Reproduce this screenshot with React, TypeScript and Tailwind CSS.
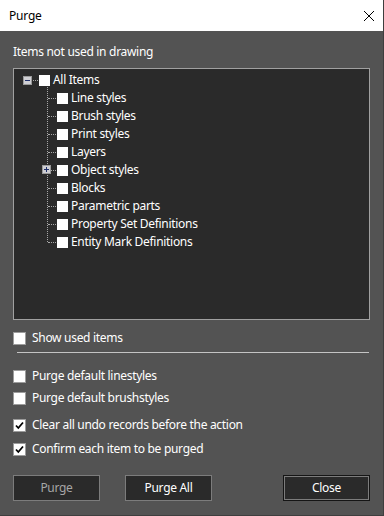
import React from "react";

const font = { fontFamily: '"Noto Sans", "Segoe UI", sans-serif' };

function TreeCheck() {
  return <span className="block w-[11px] h-[11px] bg-white shrink-0" />;
}

function ExpandBox({ plus }: { plus?: boolean }) {
  return (
    <span className="relative block w-[9px] h-[9px] border border-[#9a9a9a] bg-[#cfcfd4] shrink-0">
      <span className="absolute left-[1px] top-[3px] w-[5px] h-px bg-[#1f2f6a]" />
      {plus && <span className="absolute left-[3px] top-[1px] w-px h-[5px] bg-[#1f2f6a]" />}
    </span>
  );
}

function Check({ checked, label }: { checked?: boolean; label: string }) {
  return (
    <div className="flex items-center h-4 gap-[6px]">
      <span className="relative w-[13px] h-[13px] bg-white border border-[#9c9c9c] shrink-0">
        {checked && (
          <svg className="absolute left-[1px] top-[1px]" width="9" height="9" viewBox="0 0 9 9">
            <path d="M1 4.5 L3.3 7 L8 1.5" stroke="#000" strokeWidth="1.8" fill="none" />
          </svg>
        )}
      </span>
      <span className="text-[12px] leading-4 text-white tracking-[-0.3px]">{label}</span>
    </div>
  );
}

const children = [
  "Line styles",
  "Brush styles",
  "Print styles",
  "Layers",
  "Object styles",
  "Blocks",
  "Parametric parts",
  "Property Set Definitions",
  "Entity Mark Definitions",
];

export default function App() {
  return (
    <div className="w-[384px] h-[516px] bg-[#535353] flex flex-col border-r border-b border-[#3e3e3e]" style={font}>
      <div className="h-[31px] bg-white flex items-center justify-between pl-[9px] pr-[8px] shrink-0">
        <span className="text-[12px] text-black tracking-[-0.2px]">Purge</span>
        <svg width="12" height="12" viewBox="0 0 12 12">
          <path d="M1 1 L11 11 M11 1 L1 11" stroke="#000" strokeWidth="1" />
        </svg>
      </div>
      <div className="flex flex-col pl-[13px] pr-[13px]">
        <div className="mt-[13px] h-4 text-[12px] leading-4 text-white tracking-[-0.3px]">Items not used in drawing</div>
        <div className="mt-[8px] w-[357px] h-[252px] border border-[#a0a0a0] bg-[#2a2a2a] pt-[2px]">
          <div className="flex items-center h-[18px] pl-[9px]">
            <ExpandBox />
            <span className="w-[5px] border-t border-dotted border-[#a8a8a8] mx-[1px] shrink-0" />
            <TreeCheck />
            <span className="ml-[3px] text-[12px] text-white leading-4 tracking-[-0.3px]">All Items</span>
          </div>
          <div className="relative">
            <span className="absolute left-[33px] top-[-2px] h-[155px] border-l border-dotted border-[#a8a8a8]" />
            {children.map((c) => (
              <div key={c} className="relative flex items-center h-[18px] pl-[34px]">
                <span className="w-[8px] border-t border-dotted border-[#a8a8a8] mr-[1px] shrink-0" />
                {c === "Object styles" && (
                  <span className="absolute left-[28px] top-[4px]">
                    <ExpandBox plus />
                  </span>
                )}
                <TreeCheck />
                <span className="ml-[3px] text-[12px] text-white leading-4 tracking-[-0.3px]">{c}</span>
              </div>
            ))}
          </div>
        </div>
        <div className="mt-[10px]">
          <Check label="Show used items" />
        </div>
        <div className="mt-[6px] ml-[4px] w-[352px] h-px bg-[#c4c4c4]" />
        <div className="mt-[15px]">
          <Check label="Purge default linestyles" />
        </div>
        <div className="mt-[6px]">
          <Check label="Purge default brushstyles" />
        </div>
        <div className="mt-[11px]">
          <Check checked label="Clear all undo records before the action" />
        </div>
        <div className="mt-[8px]">
          <Check checked label="Confirm each item to be purged" />
        </div>
        <div className="mt-[18px] flex items-center w-[357px]">
          <button className="w-[87px] h-[26px] bg-[#2a2a2a] border border-[#7c7c7c] text-[12px] text-[#a6a6a6] tracking-[-0.3px]">
            Purge
          </button>
          <button className="ml-[25px] w-[87px] h-[26px] bg-[#2a2a2a] border border-[#7c7c7c] text-[12px] text-white tracking-[-0.3px]">
            Purge All
          </button>
          <button className="ml-auto w-[87px] h-[26px] bg-[#2a2a2a] border border-[#151515] shadow-[inset_0_0_0_1px_#7c7c7c] text-[12px] text-white tracking-[-0.3px]">
            Close
          </button>
        </div>
      </div>
    </div>
  );
}
